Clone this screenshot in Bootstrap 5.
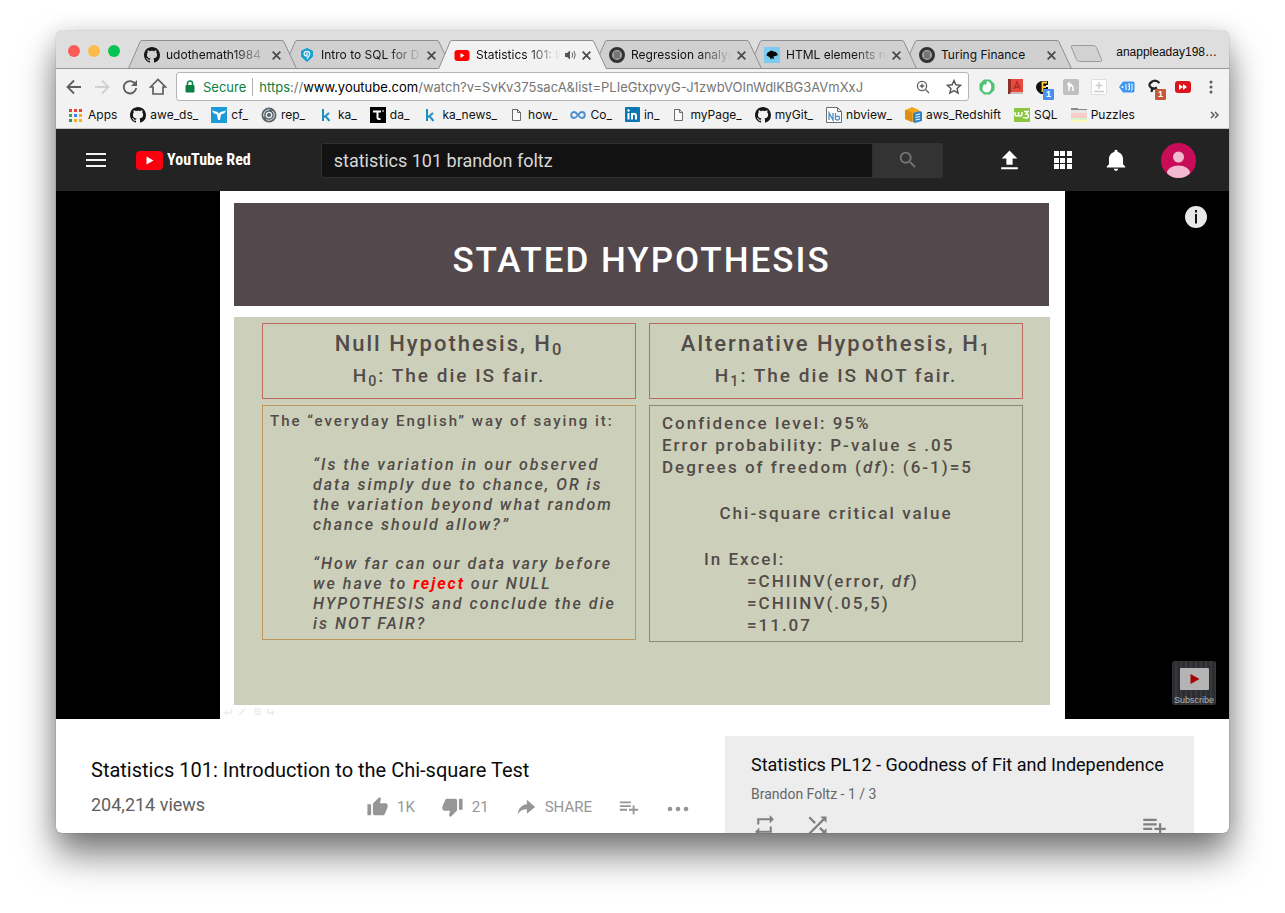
<!DOCTYPE html>
<html lang="en">
<head>
<meta charset="utf-8">
<meta name="viewport" content="width=device-width, initial-scale=1">
<title>Statistics 101: Introduction to the Chi-square Test</title>
<link rel="stylesheet" href="https://cdn.jsdelivr.net/npm/bootstrap@5.3.0/dist/css/bootstrap.min.css">
<style>
  body { background: #fff; font-family: Roboto, "Liberation Sans", sans-serif; color: #0a0a0a; overflow: hidden; }
  a, a:hover { color: inherit; text-decoration: none; }
  button { border: 0; background: none; padding: 0; color: inherit; }
  svg { display: block; flex: none; }
  .screen { height: 100vh; padding: 31px 56px 80px; }
  .window { border-radius: 6px; box-shadow: 0 0 1px rgba(0,0,0,.5), 0 22px 36px rgba(0,0,0,.5), 0 2px 22px rgba(0,0,0,.15); background: #fff; }

  /* tab strip */
  .chrome { font-family: Inter, "Liberation Sans", sans-serif; font-size: 12px; line-height: 16px; }
  .tabstrip { height: 38px; background: #dedede; border-bottom: 1px solid #989898; padding-left: 12px; }
  .lights { width: 60px; gap: 8px; padding-top: 2px; }
  .lights button { width: 12px; height: 12px; border-radius: 50%; }
  .tab { flex: 0 1 170px; height: 29px; margin: 0 0 -1px -15px; padding: 1px 16px 0 16px; min-width: 0; color: #111; }
  .tab:first-child { margin-left: 0; }
  .tab .shape { position: absolute; inset: 0; width: 100%; height: 100%; z-index: -1; fill: #d0d0d0; stroke: #8f8f8f; }
  .tab.current .shape { fill: #f2f2f2; }
  .tab .caption { flex: 1 1 0; min-width: 0; margin-left: 6px; overflow: hidden; -webkit-mask-image: linear-gradient(90deg,#000 calc(100% - 34px),transparent); mask-image: linear-gradient(90deg,#000 calc(100% - 34px),transparent); }
  .tab .caption.whole { -webkit-mask-image: none; mask-image: none; }
  .new-tab { margin-left: -4px; }
  .account { font: 12px/16px "Liberation Sans", sans-serif; padding: 4px 12px 8px 0; }

  /* toolbar */
  .toolbar { height: 34px; background: #f2f2f2; padding: 3px 4px 2px 4px; color: #5f5f5f; }
  .toolbar .nav-key { width: 28px; }
  .omnibox { height: 29px; border: 1px solid #b5b5b5; border-radius: 3px; background: #fff; margin: 0 4px 0 4px; padding: 0 6px 0 8px; font-size: 13px; }
  .omnibox .secure { color: #0b8043; }
  .omnibox .rule { width: 1px; height: 18px; background: #b0b0b0; margin: 0 6px; }
  .ext { width: 28px; height: 24px; }
  .tag { position: absolute; right: 3px; bottom: -1px; width: 11px; height: 11px; font: bold 9px/11px "Liberation Sans", sans-serif; color: #fff; text-align: center; border-radius: 1px; }
  .bookmarks { height: 26px; background: #f2f2f2; border-bottom: 1px solid #c5c5c5; padding: 0 9px 2px 11px; gap: 13px; color: #111; }
  .bookmarks a { gap: 4px; }

  /* site header */
  .masthead { height: 62px; background: #232323; color: #fff; padding: 0 33px 0 30px; }
  .wordmark { font: bold 16px/20px "Liberation Sans Narrow", "Roboto Condensed", Roboto, sans-serif; }
  .finder { flex: 0 1 622px; height: 35px; margin-left: 70px; }
  .finder input { background: #121212; border: 1px solid #303030; border-radius: 2px 0 0 2px; color: #d8d8d8; font-size: 18px; padding: 0 12px; min-width: 0; }
  .finder button { width: 70px; background: #333; border-radius: 0 2px 2px 0; color: #757575; }
  .tools { gap: 28px; }

  /* player */
  .player { background: #000; }
  .slide { width: 845px; background: #fff; padding: 12px 15px 0 14px; color: #524b49; font-weight: 500; letter-spacing: 2px; }
  .slide h1 { height: 103px; background: #53494c; color: #fff; font-size: 35px; line-height: 40px; font-weight: 500; letter-spacing: 2px; padding-top: 38px; margin: 0 1px 11px 0; }
  .board { height: 388px; background: #ccd0ba; padding: 6px 27px 0 28px; gap: 13px; }
  .board .side { flex: 1 1 0; min-width: 0; white-space: nowrap; }
  .panel { border: 1px solid #bd6a63; }
  .claim { height: 76px; margin-bottom: 6px; }
  .claim h2 { font-size: 22px; line-height: 32px; padding-top: 4px; margin: 0; font-weight: 500; }
  .claim p { font-size: 19px; line-height: 31px; margin: 0; }
  .said { border-color: #bd965c; height: 235px; padding: 5px 7px; font-size: 15px; line-height: 20px; }
  .said p { margin: 0 0 24px; }
  .said blockquote { margin: 0 0 19px 43px; font-size: 16px; font-style: italic; }
  .said strong { color: #f00; }
  .facts { border-color: #888b76; height: 237px; padding: 6px 12px; font-size: 17px; line-height: 22px; }
  .facts p { margin: 0 0 24px; }
  .slide-keys { height: 14px; color: #ececec; }
  .slide-keys svg { margin-left: -10px; }
  .info-key { position: absolute; right: 22px; top: 15px; }
  .subscribe { position: absolute; right: 13px; bottom: 14px; width: 44px; height: 44px; border-radius: 2px; background: repeating-linear-gradient(90deg,#2c2d30 0 3px,#38393c 3px 5px); color: #b5b5b5; font: 9px/12px "Liberation Sans", sans-serif; padding-top: 7px; }

  /* below the player */
  .below { padding: 17px 35px 0; gap: 35px; }
  .about h3 { font-size: 20px; line-height: 24px; font-weight: 400; margin: 0; padding-top: 22px; }
  .about .views { font-size: 18px; line-height: 24px; color: #606060; }
  .actions { color: #969696; font-size: 15px; line-height: 20px; }
  .actions button { gap: 8px; }
  .playlist { flex: 0 1 469px; background: #ededed; padding: 17px 26px 20px; }
  .playlist h4 { font-size: 18px; line-height: 24px; font-weight: 400; margin: 0 0 7px; }
  .playlist .by { font-size: 14px; line-height: 20px; color: #666; margin: 0 0 8px; }
  .playlist .keys { color: #808080; gap: 26px; }
</style>
</head>
<body>
<svg width="0" height="0" class="position-absolute" aria-hidden="true">
  <symbol id="octo" viewBox="0 0 16 16"><path fill="#181818" d="M8 0C3.58 0 0 3.58 0 8c0 3.54 2.29 6.53 5.47 7.59.4.07.55-.17.55-.38 0-.19-.01-.82-.01-1.49-2.01.37-2.53-.49-2.69-.94-.09-.23-.48-.94-.82-1.13-.28-.15-.68-.52-.01-.53.63-.01 1.08.58 1.23.82.72 1.21 1.87.87 2.33.66.07-.52.28-.87.51-1.07-1.78-.2-3.64-.89-3.64-3.95 0-.87.31-1.59.82-2.15-.08-.2-.36-1.02.08-2.12 0 0 .67-.21 2.2.82.64-.18 1.32-.27 2-.27s1.36.09 2 .27c1.53-1.04 2.2-.82 2.2-.82.44 1.1.16 1.92.08 2.12.51.56.82 1.27.82 2.15 0 3.07-1.87 3.75-3.65 3.95.29.25.54.73.54 1.48 0 1.07-.01 1.93-.01 2.2 0 .21.15.46.55.38A8.01 8.01 0 0016 8c0-4.42-3.58-8-8-8z"/></symbol>
  <symbol id="cross" viewBox="0 0 10 10"><path d="M1.5 1.5l7 7M8.500 1.5l-7 7" stroke="#4a4a4a" stroke-width="1.600"/></symbol>
  <symbol id="tabshape" viewBox="0 0 170 29" preserveAspectRatio="none"><path d="M.5 28.500 12 2Q12.600.5 14 .5H154Q155.500.5 156 2L168.500 28.500z"/></symbol>
  <symbol id="tabfront" viewBox="0 0 170 29" preserveAspectRatio="none"><path d="M.5 29 12 2Q12.600.5 14 .5H154Q155.500.5 156 2L168.500 29"/></symbol>
  <symbol id="seal" viewBox="0 0 16 16"><circle cx="8" cy="8" r="6.500" fill="#a5a5a5" stroke="#333" stroke-width="3"/><path d="M5 6h6M5 8h6M5 10h6M6 4.500v7M8 4v8M10 4.500v7" stroke="#555" stroke-width=".7"/></symbol>
  <symbol id="kay" viewBox="0 0 16 16"><path d="M5 2v12M11 6 6 10.200M7.500 9.200 11.500 14" fill="none" stroke="#1f8fbf" stroke-width="2"/></symbol>
  <symbol id="sheet" viewBox="2 0 14 16"><path d="M4.500 2.500h5l3 3v8h-8zM9.500 2.500v3h3" fill="#fafafa" stroke="#6b6b6b"/></symbol>
  <symbol id="add" viewBox="0 0 24 24"><path fill="currentColor" d="M14 10H2v2h12v-2zm0-4H2v2h12V6zm4 8v-4h-2v4h-4v2h4v4h2v-4h4v-2h-4zM2 16h8v-2H2v2z"/></symbol>
</svg>

<div class="screen">
<div class="window h-100 overflow-hidden d-flex flex-column">

  <header class="chrome flex-shrink-0">
    <div class="tabstrip d-flex">
      <div class="lights d-flex align-items-center flex-shrink-0">
        <button aria-label="Close" style="background:#fc5b57"></button>
        <button aria-label="Minimize" style="background:#fdbc4a"></button>
        <button aria-label="Zoom" style="background:#05c552"></button>
      </div>
      <nav class="d-flex align-items-end flex-grow-1 h-100 position-relative" style="min-width:0" aria-label="Tabs">
        <div class="tab position-relative d-flex align-items-center" style="z-index:6">
          <svg class="shape"><use href="#tabshape"/></svg>
          <svg width="16" height="16"><use href="#octo"/></svg>
          <a href="#" class="caption text-nowrap">udothemath1984</a>
          <button class="ms-1" aria-label="Close tab"><svg width="11" height="11"><use href="#cross"/></svg></button>
        </div>
        <div class="tab position-relative d-flex align-items-center" style="z-index:5">
          <svg class="shape"><use href="#tabshape"/></svg>
          <svg width="16" height="16" viewBox="0 0 16 16"><path d="M8 1.500 13.500 4v5.500L8 14.500 2.500 9.500V4z" fill="#1a9fd0" stroke="#1a9fd0" stroke-linejoin="round"/><path d="M8 4.500c2.200 0 2.700 1 2.700 2.500S10 9 8 11.800M8 4.500C6 4.500 5.200 5.500 5.200 7S6.500 9 8 9V6" fill="none" stroke="#e5f6ff" stroke-width="1.300"/></svg>
          <a href="#" class="caption text-nowrap">Intro to SQL for Da</a>
          <button class="ms-1" aria-label="Close tab"><svg width="11" height="11"><use href="#cross"/></svg></button>
        </div>
        <div class="tab current position-relative d-flex align-items-center" style="z-index:9">
          <svg class="shape"><use href="#tabfront"/></svg>
          <svg width="16" height="16" viewBox="0 0 16 16"><rect x=".5" y="3" width="15" height="11" rx="3" fill="#f00"/><path d="M6.500 6v5l4-2.500z" fill="#fff"/></svg>
          <a href="#" class="caption text-nowrap">Statistics 101: In</a>
          <svg width="12" height="10" viewBox="0 0 12 10" class="ms-1 me-1"><path d="M0 3h2l3-2.500v9L2 7H0z" fill="#555"/><path d="M7 2.500q1.500 2.500 0 5M9 1q2.500 4 0 8" fill="none" stroke="#666"/></svg>
          <button aria-label="Close tab"><svg width="11" height="11"><use href="#cross"/></svg></button>
        </div>
        <div class="tab position-relative d-flex align-items-center" style="z-index:4">
          <svg class="shape"><use href="#tabshape"/></svg>
          <svg width="16" height="16"><use href="#seal"/></svg>
          <a href="#" class="caption text-nowrap">Regression analys</a>
          <button class="ms-1" aria-label="Close tab"><svg width="11" height="11"><use href="#cross"/></svg></button>
        </div>
        <div class="tab position-relative d-flex align-items-center" style="z-index:3">
          <svg class="shape"><use href="#tabshape"/></svg>
          <svg width="16" height="16" viewBox="0 0 16 16"><path fill="#7ccbf0" d="M0 0h16v16H0z"/><path d="M2.500 8.500C3 5 6 4 8 3.500l1.500 1 2.500.500 2 3-2.500 1-2 .5.500 3L8 11l-1 1.500L5.500 10z" fill="#0a0a0a"/></svg>
          <a href="#" class="caption text-nowrap">HTML elements re</a>
          <button class="ms-1" aria-label="Close tab"><svg width="11" height="11"><use href="#cross"/></svg></button>
        </div>
        <div class="tab position-relative d-flex align-items-center" style="z-index:2">
          <svg class="shape"><use href="#tabshape"/></svg>
          <svg width="16" height="16"><use href="#seal"/></svg>
          <a href="#" class="caption whole text-nowrap">Turing Finance</a>
          <button class="ms-1" aria-label="Close tab"><svg width="11" height="11"><use href="#cross"/></svg></button>
        </div>
        <button class="new-tab align-self-center pt-2" aria-label="New tab"><svg width="35" height="17" viewBox="0 0 35 17"><path d="M3.500.5h21q2 0 3 2l5 12q.8 2-1 2h-21q-2 0-3-2l-5-12q-1-2 1-2z" fill="#d2d2d2" stroke="#9a9a9a"/></svg></button>
      </nav>
      <div class="account align-self-end flex-shrink-0 text-nowrap">anappleaday198…</div>
    </div>

    <div class="toolbar d-flex align-items-center">
      <button class="nav-key d-flex justify-content-center" aria-label="Back"><svg width="16" height="16" viewBox="0 0 16 16" fill="none" stroke="currentColor" stroke-width="1.800"><path d="M15 8H2M8 1.500 1.500 8 8 14.500"/></svg></button>
      <button class="nav-key d-flex justify-content-center" aria-label="Forward" style="color:#d0d0d0"><svg width="16" height="16" viewBox="0 0 16 16" fill="none" stroke="currentColor" stroke-width="1.800"><path d="M1 8h13M8 1.500 14.500 8 8 14.500"/></svg></button>
      <button class="nav-key d-flex justify-content-center" aria-label="Reload"><svg width="16" height="16" viewBox="0 0 16 16"><path d="M13.300 5A6.200 6.200 0 1 0 14.200 9" fill="none" stroke="currentColor" stroke-width="1.900"/><path d="M15 1v6H9z" fill="currentColor"/></svg></button>
      <button class="nav-key d-flex justify-content-center" aria-label="Home"><svg width="18" height="17" viewBox="0 0 18 17" fill="none" stroke="currentColor" stroke-width="1.700"><path d="M1.500 9 9 1.500 16.500 9H14v7H4V9z"/></svg></button>
      <div class="omnibox flex-grow-1 d-flex align-items-center text-nowrap overflow-hidden">
        <svg width="10" height="13" viewBox="0 0 10 13"><path d="M2.500 6V3.500a2.500 2.500 0 0 1 5 0V6" fill="none" stroke="#0b8043" stroke-width="1.500"/><rect x=".5" y="5" width="9" height="7.500" rx="1" fill="#0b8043"/></svg>
        <span class="secure ms-2">Secure</span><span class="rule"></span>
        <a href="#" class="flex-grow-1 overflow-hidden" style="color:#757575"><span class="secure">https</span>://<span class="text-black">www.youtube.com</span>/watch?v=SvKv375sacA&amp;list=PLIeGtxpvyG-J1zwbVOInWdlKBG3AVmXxJ</a>
        <button class="me-3" aria-label="Zoom"><svg width="14" height="14" viewBox="0 0 14 14" fill="none" stroke="#5f5f5f" stroke-width="1.300"><circle cx="6" cy="6" r="4.600"/><path d="M9.500 9.500 13 13M3.800 6h4.400M6 3.800v4.400"/></svg></button>
        <button aria-label="Bookmark"><svg width="16" height="16" viewBox="0 0 16 16" fill="none" stroke="#555" stroke-width="1.400"><path d="m8 1.500 1.900 4.300 4.700.5-3.500 3.100 1 4.600L8 11.600 3.900 14l1-4.600-3.500-3.100 4.700-.5z"/></svg></button>
      </div>
      <button class="ext d-flex align-items-center justify-content-center" aria-label="Timer"><svg width="16" height="16" viewBox="0 0 16 16"><path d="M5 .5h6L15.500 5v6L11 15.500H5L.5 11V5z" fill="#4cc474"/><path d="M8 2c6 1 5.500 11.500 0 11.500S2.500 7.500 5.500 5q1.500 3 2.500-3z" fill="#fff"/></svg></button>
      <button class="ext d-flex align-items-center justify-content-center" aria-label="Dictionary"><svg width="15" height="16" viewBox="0 0 15 16"><path fill="#e8493c" d="M0 0h15v13H0z"/><path fill="#8e2f2a" d="M0 0h3v15H0z"/><path d="M3 13h12v2H2z" fill="#c9b9b5"/><path d="m6 10 3-7 3 7M7 8h4" stroke="#a52e26" stroke-width="1.400" fill="none"/></svg></button>
      <button class="ext position-relative d-flex align-items-center justify-content-center" aria-label="Fonts"><svg width="16" height="16" viewBox="0 0 16 16"><path d="M6 2h7v4h-2v2h2v3h-3v4H6q-5-3-5-7t5-6z" fill="#111"/><path d="M6.500 3.500H12M7.500 3v10M7.500 8H11" stroke="#ffc83d" stroke-width="1.800"/></svg><span class="tag" style="background:#4a90f0">1</span></button>
      <button class="ext d-flex align-items-center justify-content-center" aria-label="Honey"><svg width="16" height="16" viewBox="0 0 16 16"><rect width="16" height="16" rx="2" fill="#bfc0c2"/><path d="M6 3v9M6 8q4-3 4 1v3M4 5.500h5" fill="none" stroke="#fff" stroke-width="1.500"/></svg></button>
      <button class="ext d-flex align-items-center justify-content-center" aria-label="Add note"><svg width="16" height="16" viewBox="0 0 16 16"><rect x=".5" y=".5" width="15" height="15" rx="1" fill="#fff" stroke="#ddd"/><path d="M8 3v7M4.500 6.500h7M3 12.500h10" stroke="#ccc" stroke-width="1.500"/></svg></button>
      <button class="ext d-flex align-items-center justify-content-center" aria-label="Label"><svg width="16" height="12" viewBox="0 0 16 12"><path d="m0 6 4-5.500h10q1.500 0 1.500 1.500v8q0 1.500-1.500 1.500H4z" fill="#3f96f3"/><path d="M7 3v6M9 3h1.500v2.500H9M10.500 5.500v3H9M12 3h1v6h-1" fill="none" stroke="#fff"/><circle cx="3.500" cy="6" r="1" fill="#fff"/></svg></button>
      <button class="ext position-relative d-flex align-items-center justify-content-center" aria-label="Scripts"><svg width="16" height="16" viewBox="0 0 16 16"><path d="M12.500 4Q8.500 0 4.500 3T4 8.500Q6 11 10 8.500M5 13q-1-3 2-4" fill="none" stroke="#222" stroke-width="2.200"/></svg><span class="tag" style="background:#c65a34">1</span></button>
      <button class="ext d-flex align-items-center justify-content-center" aria-label="Skip"><svg width="16" height="12" viewBox="0 0 16 12"><rect width="16" height="12" rx="3" fill="#d9141b"/><path d="M4 3v6l4-3zM8 3v6l4-3z" fill="#fff"/></svg></button>
      <button class="ext d-flex align-items-center justify-content-center" aria-label="Menu"><svg width="4" height="14" viewBox="0 0 4 14" fill="#5a5a5a"><circle cx="2" cy="2" r="1.500"/><circle cx="2" cy="7" r="1.500"/><circle cx="2" cy="12" r="1.500"/></svg></button>
    </div>

    <nav class="bookmarks d-flex align-items-center text-nowrap overflow-hidden" aria-label="Bookmarks">
      <a href="#" class="d-flex align-items-center"><svg width="17" height="16" viewBox="0 0 17 16"><path d="M2 2h3v3H2zM7 2h3v3H7zM12 2h3v3h-3z" fill="#ea4335"/><path d="M2 7h3v3H2z" fill="#34a853"/><path d="M7 7h3v3H7z" fill="#4285f4"/><path d="M12 7h3v3h-3zM7 12h3v3H7zM12 12h3v3h-3z" fill="#fbab1f"/><path d="M2 12h3v3H2z" fill="#2a9a4c"/></svg>Apps</a>
      <a href="#" class="d-flex align-items-center"><svg width="16" height="16"><use href="#octo"/></svg>awe_ds_</a>
      <a href="#" class="d-flex align-items-center"><svg width="16" height="16" viewBox="0 0 16 16"><path d="M0 0h16v16H0z" fill="#1d9bd7"/><path d="M1 3.500 6.500 5 8 6.500 9.500 5 15 3.500 13.500 6 10 7.500 9 13H7L6 7.500 2.500 6z" fill="#fff"/></svg>cf_</a>
      <a href="#" class="d-flex align-items-center"><svg width="16" height="16" viewBox="0 0 16 16" fill="none"><circle cx="8" cy="8" r="7.500" fill="#59646b"/><circle cx="8" cy="8" r="5.300" stroke="#dfe3e5" stroke-dasharray="11 3"/><circle cx="8" cy="8" r="2.700" stroke="#e8ebec" stroke-width="1.300"/></svg>rep_</a>
      <a href="#" class="d-flex align-items-center"><svg width="16" height="16"><use href="#kay"/></svg>ka_</a>
      <a href="#" class="d-flex align-items-center"><svg width="16" height="16" viewBox="0 0 16 16"><path d="M0 0h16v16H0z"/><path d="M3 4.500h8M7.500 4v6.500q0 2 3 1.500M13 3.500v1" fill="none" stroke="#fff" stroke-width="2"/></svg>da_</a>
      <a href="#" class="d-flex align-items-center"><svg width="16" height="16"><use href="#kay"/></svg>ka_news_</a>
      <a href="#" class="d-flex align-items-center"><svg width="14" height="16"><use href="#sheet"/></svg>how_</a>
      <a href="#" class="d-flex align-items-center"><svg width="16" height="16" viewBox="0 0 16 16"><path d="M8 8C6.500 6 5.500 5 4.200 5a3 3 0 0 0 0 6C5.500 11 6.500 10 8 8s2.500-3 3.800-3a3 3 0 0 1 0 6C10.500 11 9.500 10 8 8z" fill="none" stroke="#4c8fd2" stroke-width="1.900"/></svg>Co_</a>
      <a href="#" class="d-flex align-items-center"><svg width="15" height="15" viewBox="0 0 15 15"><rect width="15" height="15" rx="1" fill="#0b76b4"/><path d="M3.500 6v6.500M7 6v6.500M7 9q0-2.200 2-2.200T11 9v3.500" fill="none" stroke="#fff" stroke-width="2"/><circle cx="3.500" cy="3.500" r="1.200" fill="#fff"/></svg>in_</a>
      <a href="#" class="d-flex align-items-center"><svg width="14" height="16"><use href="#sheet"/></svg>myPage_</a>
      <a href="#" class="d-flex align-items-center"><svg width="16" height="16"><use href="#octo"/></svg>myGit_</a>
      <a href="#" class="d-flex align-items-center"><svg width="16" height="16" viewBox="0 0 16 16"><path d="M.5.500h11l4 4v11H.5zM11.500.5v4h4" fill="#fff" stroke="#6c6c6c"/><path d="M3 13V6l4 7V6M9.500 6v7M9.500 10q4-2 4 1t-4 1.500" fill="none" stroke="#4f8dbf" stroke-width="1.300"/></svg>nbview_</a>
      <a href="#" class="d-flex align-items-center"><svg width="17" height="16" viewBox="0 0 17 16"><path d="m0 3 7-3 7 3v9l-7 3-7-3z" fill="#f2a61f"/><path d="m0 3 7 2v10l-7-3z" fill="#dc8f14"/><path d="m8 6 7-2 2 1v9l-7 2-2-1z" fill="#2f86c4"/><path d="M10.500 8 15 7M10.500 10.500l4.500-1M10.500 13l4.500-1" stroke="#fff"/></svg>aws_Redshift</a>
      <a href="#" class="d-flex align-items-center"><svg width="16" height="14" viewBox="0 0 16 14"><path fill="#8ac640" d="M0 0h16v14H0z"/><path d="M1 4v2q0 2 1.700 2T4.500 6V4v2q0 2 1.700 2T8 6V4M10 3.500h4L12 6q2.500 0 2.500 2T12 10t-2.500-1" fill="none" stroke="#fff" stroke-width="1.400"/></svg>SQL</a>
      <a href="#" class="d-flex align-items-center"><svg width="16" height="14" viewBox="0 0 16 14"><path fill="#8a8a8a" d="M0 0h7v1h9v1H0z"/><path fill="#e6e6e6" d="M0 2h16v3H0z"/><path fill="#fbcaca" d="M0 5h16v5H0z"/><path fill="#d5f5c8" d="M0 10h16v2H0z"/><path fill="#fbf7b8" d="M0 12h16v2H0z"/></svg>Puzzles</a>
      <button class="ms-auto" aria-label="More bookmarks"><svg width="10" height="8" viewBox="0 0 10 8" fill="none" stroke="#555" stroke-width="1.400"><path d="m1 1 3 3-3 3M5 1l3 3-3 3"/></svg></button>
    </nav>
  </header>

  <header class="masthead d-flex align-items-center flex-shrink-0">
    <button aria-label="Guide"><svg width="20" height="14" viewBox="0 0 20 14" fill="#f3f3f3"><path d="M0 0h20v2H0zM0 6h20v2H0zM0 12h20v2H0z"/></svg></button>
    <a href="#" class="d-flex align-items-center gap-1" style="margin-left:30px">
      <svg width="27" height="19" viewBox="0 0 27 19"><rect width="27" height="19" rx="4" fill="#f8000e"/><path d="M10.500 5.500v8l7-4z" fill="#fff"/></svg>
      <span class="wordmark text-nowrap">YouTube Red</span>
    </a>
    <form class="finder d-flex" role="search">
      <input class="flex-grow-1" type="text" aria-label="Search" value="statistics 101 brandon foltz">
      <button type="button" class="d-flex align-items-center justify-content-center flex-shrink-0" aria-label="Search"><svg width="22" height="22" viewBox="0 0 24 24"><path fill="currentColor" d="M15.500 14h-.79l-.28-.27A6.471 6.471 0 0 0 16 9.500 6.500 6.500 0 1 0 9.500 16c1.610 0 3.090-.59 4.230-1.570l.270.280v.79l5 4.990L20.490 19l-4.990-5zm-6 0C7.010 14 5 11.990 5 9.500S7.010 5 9.500 5 14 7.010 14 9.500 11.990 14 9.500 14z"/></svg></button>
    </form>
    <div class="tools d-flex align-items-center ms-auto">
      <button aria-label="Upload"><svg width="25" height="25" viewBox="0 0 24 24" fill="#fff"><path d="M9 16h6v-6h4.500L12 2.500 4.500 10H9zM4 18.500h16v2H4z"/></svg></button>
      <button aria-label="Apps"><svg width="25" height="25" viewBox="0 0 25 25" fill="#fff"><path d="M4 3h5v5H4zM10 3h5v5h-5zM17 3h5v5h-5zM4 10h5v5H4zM10 10h5v5h-5zM17 10h5v5h-5zM4 16h5v5H4zM10 16h5v5h-5zM17 16h5v5h-5z"/></svg></button>
      <button aria-label="Notifications"><svg width="26" height="26" viewBox="0 0 24 24" fill="#fff"><path d="M12 22c1.100 0 2-.9 2-2h-4c0 1.100.890 2 2 2zm6.500-6v-5c0-3.070-2-5.640-5-6.320V4c0-.83-.67-1.500-1.500-1.500s-1.500.67-1.500 1.500v.68C7.630 5.360 5.500 7.920 5.500 11v5L3.500 18v1h17v-1l-2-2z"/></svg></button>
      <button class="ms-1" aria-label="Account"><svg width="35" height="35" viewBox="0 0 35 35"><defs><clipPath id="face"><circle cx="17.500" cy="17.500" r="17.500"/></clipPath></defs><g clip-path="url(#face)"><path fill="#c80c58" d="M0 0h35v35H0z"/><circle cx="17.500" cy="14" r="5.500" fill="#f2bacf"/><ellipse cx="17.500" cy="30" rx="11.500" ry="7.500" fill="#f2bacf"/></g></svg></button>
    </div>
  </header>

  <main class="flex-grow-1">
    <section class="player position-relative d-flex justify-content-center">
      <article class="slide">
        <h1 class="text-center text-nowrap">STATED HYPOTHESIS</h1>
        <div class="board d-flex">
          <div class="side">
            <div class="panel claim text-center">
              <h2>Null Hypothesis, H<sub>0</sub></h2>
              <p>H<sub>0</sub>: The die IS fair.</p>
            </div>
            <div class="panel said">
              <p>The “everyday English” way of saying it:</p>
              <blockquote>“Is the variation in our observed<br>data simply due to chance, OR is<br>the variation beyond what random<br>chance should allow?”</blockquote>
              <blockquote>“How far can our data vary before<br>we have to <strong>reject</strong> our NULL<br>HYPOTHESIS and conclude the die<br>is NOT FAIR?</blockquote>
            </div>
          </div>
          <div class="side">
            <div class="panel claim text-center">
              <h2>Alternative Hypothesis, H<sub>1</sub></h2>
              <p>H<sub>1</sub>: The die IS NOT fair.</p>
            </div>
            <div class="panel facts">
              <p>Confidence level: 95%<br>Error probability: P-value ≤ .05<br>Degrees of freedom (<em>df</em>): (6-1)=5</p>
              <p class="text-center">Chi-square critical value</p>
              <div style="padding-left:42px">In Excel:
                <div style="padding-left:43px">=CHIINV(error, <em>df</em>)<br>=CHIINV(.05,5)<br>=11.07</div>
              </div>
            </div>
          </div>
        </div>
        <div class="slide-keys d-flex align-items-center" aria-hidden="true">
          <svg width="50" height="8" viewBox="0 0 50 8" fill="none" stroke="currentColor" stroke-width="1.500"><path d="M7 1v4H1M3 3 1 5l2 2M15 7l6-6M30 1h7M30 3.500h7M30 6h7M44 1v4h6M48 3l2 2-2 2"/></svg>
        </div>
      </article>
      <button class="info-key" aria-label="Info"><svg width="22" height="22" viewBox="0 0 22 22"><circle cx="11" cy="11" r="11" fill="#e8e8e8"/><path d="M10 4h2v2.500h-2zM10 8h2v9.500h-2z" fill="#111"/></svg></button>
      <button class="subscribe d-flex flex-column align-items-center"><svg width="29" height="22" viewBox="0 0 29 22"><rect width="29" height="22" rx="1" fill="#b4b4b4"/><path d="M10.500 6v10l9-5z" fill="#a80008"/></svg><span class="mt-1">Subscribe</span></button>
    </section>

    <section class="below d-flex">
      <div class="about flex-grow-1">
        <h3>Statistics 101: Introduction to the Chi-square Test</h3>
        <div class="d-flex align-items-center" style="padding-top:10px">
          <span class="views">204,214 views</span>
          <div class="actions d-flex align-items-center ms-auto pt-1" style="gap:26px">
            <button class="d-flex align-items-center"><svg width="23" height="22" viewBox="0 0 24 24"><path fill="currentColor" d="M1 21h4V9H1v12zm22-11c0-1.100-.9-2-2-2h-6.310l.950-4.570.030-.320c0-.410-.170-.790-.440-1.060L14.170 1 7.590 7.590C7.220 7.950 7 8.450 7 9v10c0 1.100.9 2 2 2h9c.830 0 1.540-.5 1.840-1.220l3.020-7.050c.09-.230.140-.470.140-.730v-2z"/></svg>1K</button>
            <button class="d-flex align-items-center"><svg width="23" height="22" viewBox="0 0 24 24"><path fill="currentColor" d="M15 3H6c-.830 0-1.540.5-1.840 1.220l-3.020 7.050c-.09.230-.140.470-.140.730v2c0 1.100.9 2 2 2h6.310l-.950 4.570-.030.320c0 .410.170.790.440 1.060L9.830 23l6.590-6.590c.360-.360.580-.860.580-1.410V5c0-1.100-.9-2-2-2zm4 0v12h4V3h-4z"/></svg>21</button>
            <button class="d-flex align-items-center"><svg width="22" height="20" viewBox="0 0 24 22"><path fill="currentColor" d="M13 8V3l9 8-9 7.500v-5C8 13.500 5 15.500 3 19c.5-6 4-10.500 10-11z"/></svg>SHARE</button>
            <button aria-label="Add to"><svg width="22" height="22"><use href="#add"/></svg></button>
            <button aria-label="More actions" class="pt-1"><svg width="24" height="10" viewBox="0 0 24 10" fill="currentColor"><circle cx="4" cy="5" r="2.300"/><circle cx="12" cy="5" r="2.300"/><circle cx="20" cy="5" r="2.300"/></svg></button>
          </div>
        </div>
      </div>
      <aside class="playlist">
        <h4>Statistics PL12 - Goodness of Fit and Independence</h4>
        <p class="by">Brandon Foltz - 1 / 3</p>
        <div class="keys d-flex align-items-center">
          <button aria-label="Loop"><svg width="27" height="25" viewBox="0 0 24 24"><path fill="currentColor" d="M7 7h10v3l4-4-4-4v3H5v6h2V7zm10 10H7v-3l-4 4 4 4v-3h12v-6h-2v4z"/></svg></button>
          <button aria-label="Shuffle"><svg width="27" height="27" viewBox="0 0 24 24"><path fill="currentColor" d="M10.590 9.170L5.410 4 4 5.410l5.170 5.170 1.420-1.410zM14.500 4l2.040 2.040L4 18.590 5.410 20 17.960 7.460 20 9.500V4h-5.500zm.330 9.410l-1.410 1.410 3.130 3.130L14.500 20H20v-5.500l-2.040 2.040-3.130-3.130z"/></svg></button>
          <button class="ms-auto" aria-label="Save playlist"><svg width="27" height="27"><use href="#add"/></svg></button>
        </div>
      </aside>
    </section>
  </main>
</div>
</div>
<script src="https://cdn.jsdelivr.net/npm/bootstrap@5.3.0/dist/js/bootstrap.bundle.min.js"></script>
</body>
</html>
